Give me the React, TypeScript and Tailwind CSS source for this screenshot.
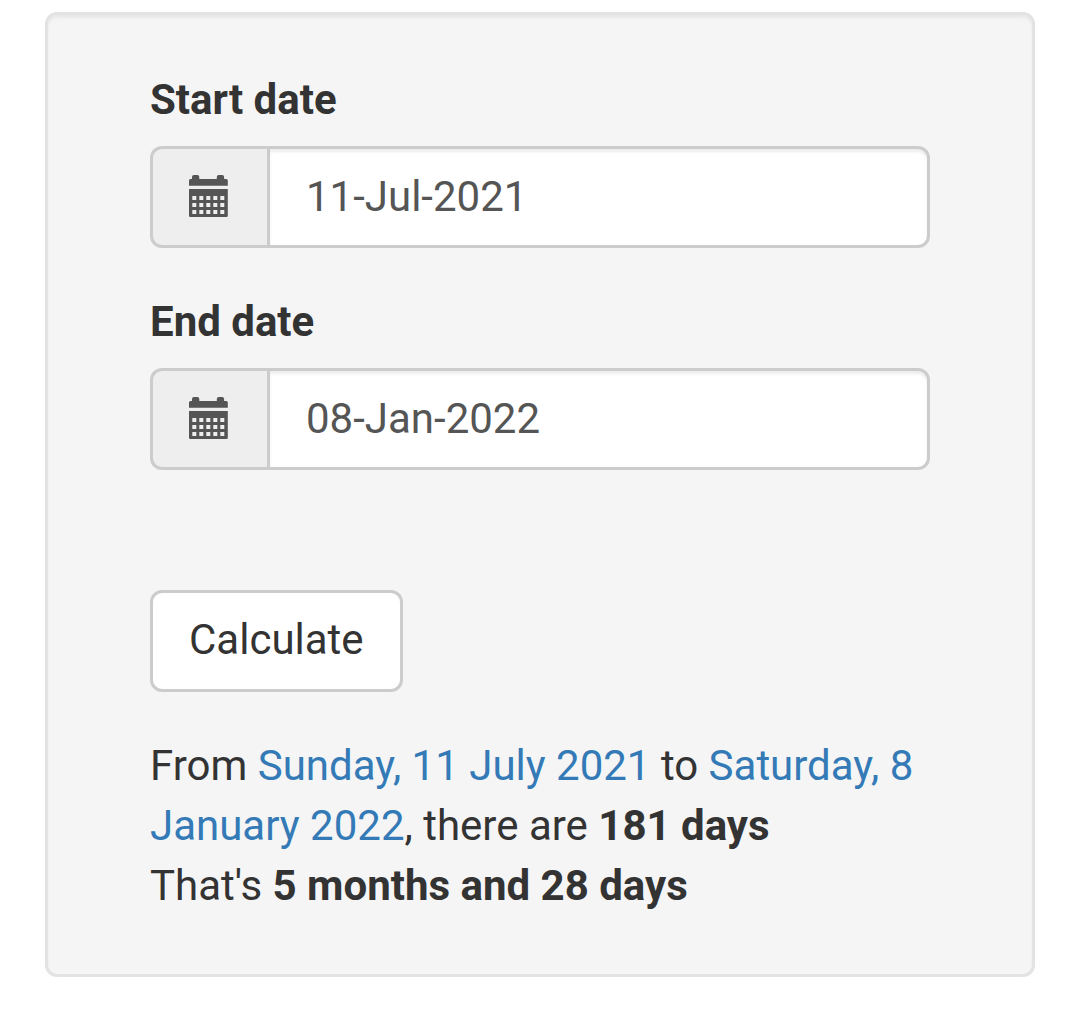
import { useState } from "react";

function CalendarIcon() {
  const columns = [3.3, 10.3, 17.3, 24.3, 31.3];
  const rows = [21, 28, 35];

  return (
    <svg className="block size-[42px]" viewBox="0 0 42 42" fill="none">
      <path
        d="M0 10.7V5.5Q0 4 1.5 4H3V2Q3 0 5 0H8.3Q10.3 0 10.3 2V4H27.8V2Q27.8 0 29.8 0H33.1Q35.1 0 35.1 2V4H37.3Q38.8 4 38.8 5.5V10.7Z"
        fill="#555555"
      />
      <path
        d="M0 14H38.8V40.7Q38.8 42 37.5 42H1.3Q0 42 0 40.7Z"
        fill="#555555"
      />
      {rows.map((y) =>
        columns.map((x) => (
          <rect key={`${x}-${y}`} x={x} y={y} width="4" height="4" fill="#eeeeee" />
        ))
      )}
    </svg>
  );
}

type DateFieldProps = {
  id: string;
  label: string;
  value: string;
  onChange: (value: string) => void;
};

function DateField({ id, label, value, onChange }: DateFieldProps) {
  return (
    <div>
      <label htmlFor={id} className="block mb-4 font-bold">
        {label}
      </label>
      <div className="flex h-[102px]">
        <span className="flex w-[117px] shrink-0 items-center rounded-l-[12px] border-[3px] border-r-0 border-[#cccccc] bg-[#eeeeee] pb-0.5 pl-9">
          <CalendarIcon />
        </span>
        <input
          id={id}
          type="text"
          value={value}
          onChange={(e) => onChange(e.target.value)}
          className="min-w-0 flex-1 rounded-r-[12px] border-[3px] border-[#cccccc] bg-white px-9 text-[#555555] shadow-[inset_0_3px_3px_rgba(0,0,0,0.075)] outline-none"
        />
      </div>
    </div>
  );
}

export default function App() {
  const [startDate, setStartDate] = useState("11-Jul-2021");
  const [endDate, setEndDate] = useState("08-Jan-2022");

  return (
    <div className="min-h-screen bg-white px-[45px] pt-3 font-['Roboto',sans-serif] text-[42px] leading-[60px] text-[#333333]">
      <div className="rounded-[12px] border-[3px] border-[#e3e3e3] bg-[#f5f5f5] px-[102px] pt-[55px] pb-[58px] shadow-[inset_0_3px_3px_rgba(0,0,0,0.05)]">
        <div className="flex flex-col gap-11">
          <DateField id="start" label="Start date" value={startDate} onChange={setStartDate} />
          <DateField id="end" label="End date" value={endDate} onChange={setEndDate} />
        </div>

        <button
          type="button"
          className="mt-[120px] block h-[102px] rounded-[12px] border-[3px] border-[#cccccc] bg-white px-9 pb-0.5"
        >
          Calculate
        </button>

        {/* Result */}
        <p className="mt-11">
          From <span className="text-[#337ab7]">Sunday, 11 July 2021</span> to{" "}
          <span className="text-[#337ab7]">Saturday, 8 January 2022</span>, there are{" "}
          <b className="font-bold">181 days</b>
          <br />
          That's <b className="font-bold">5 months and 28 days</b>
        </p>
      </div>
    </div>
  );
}
